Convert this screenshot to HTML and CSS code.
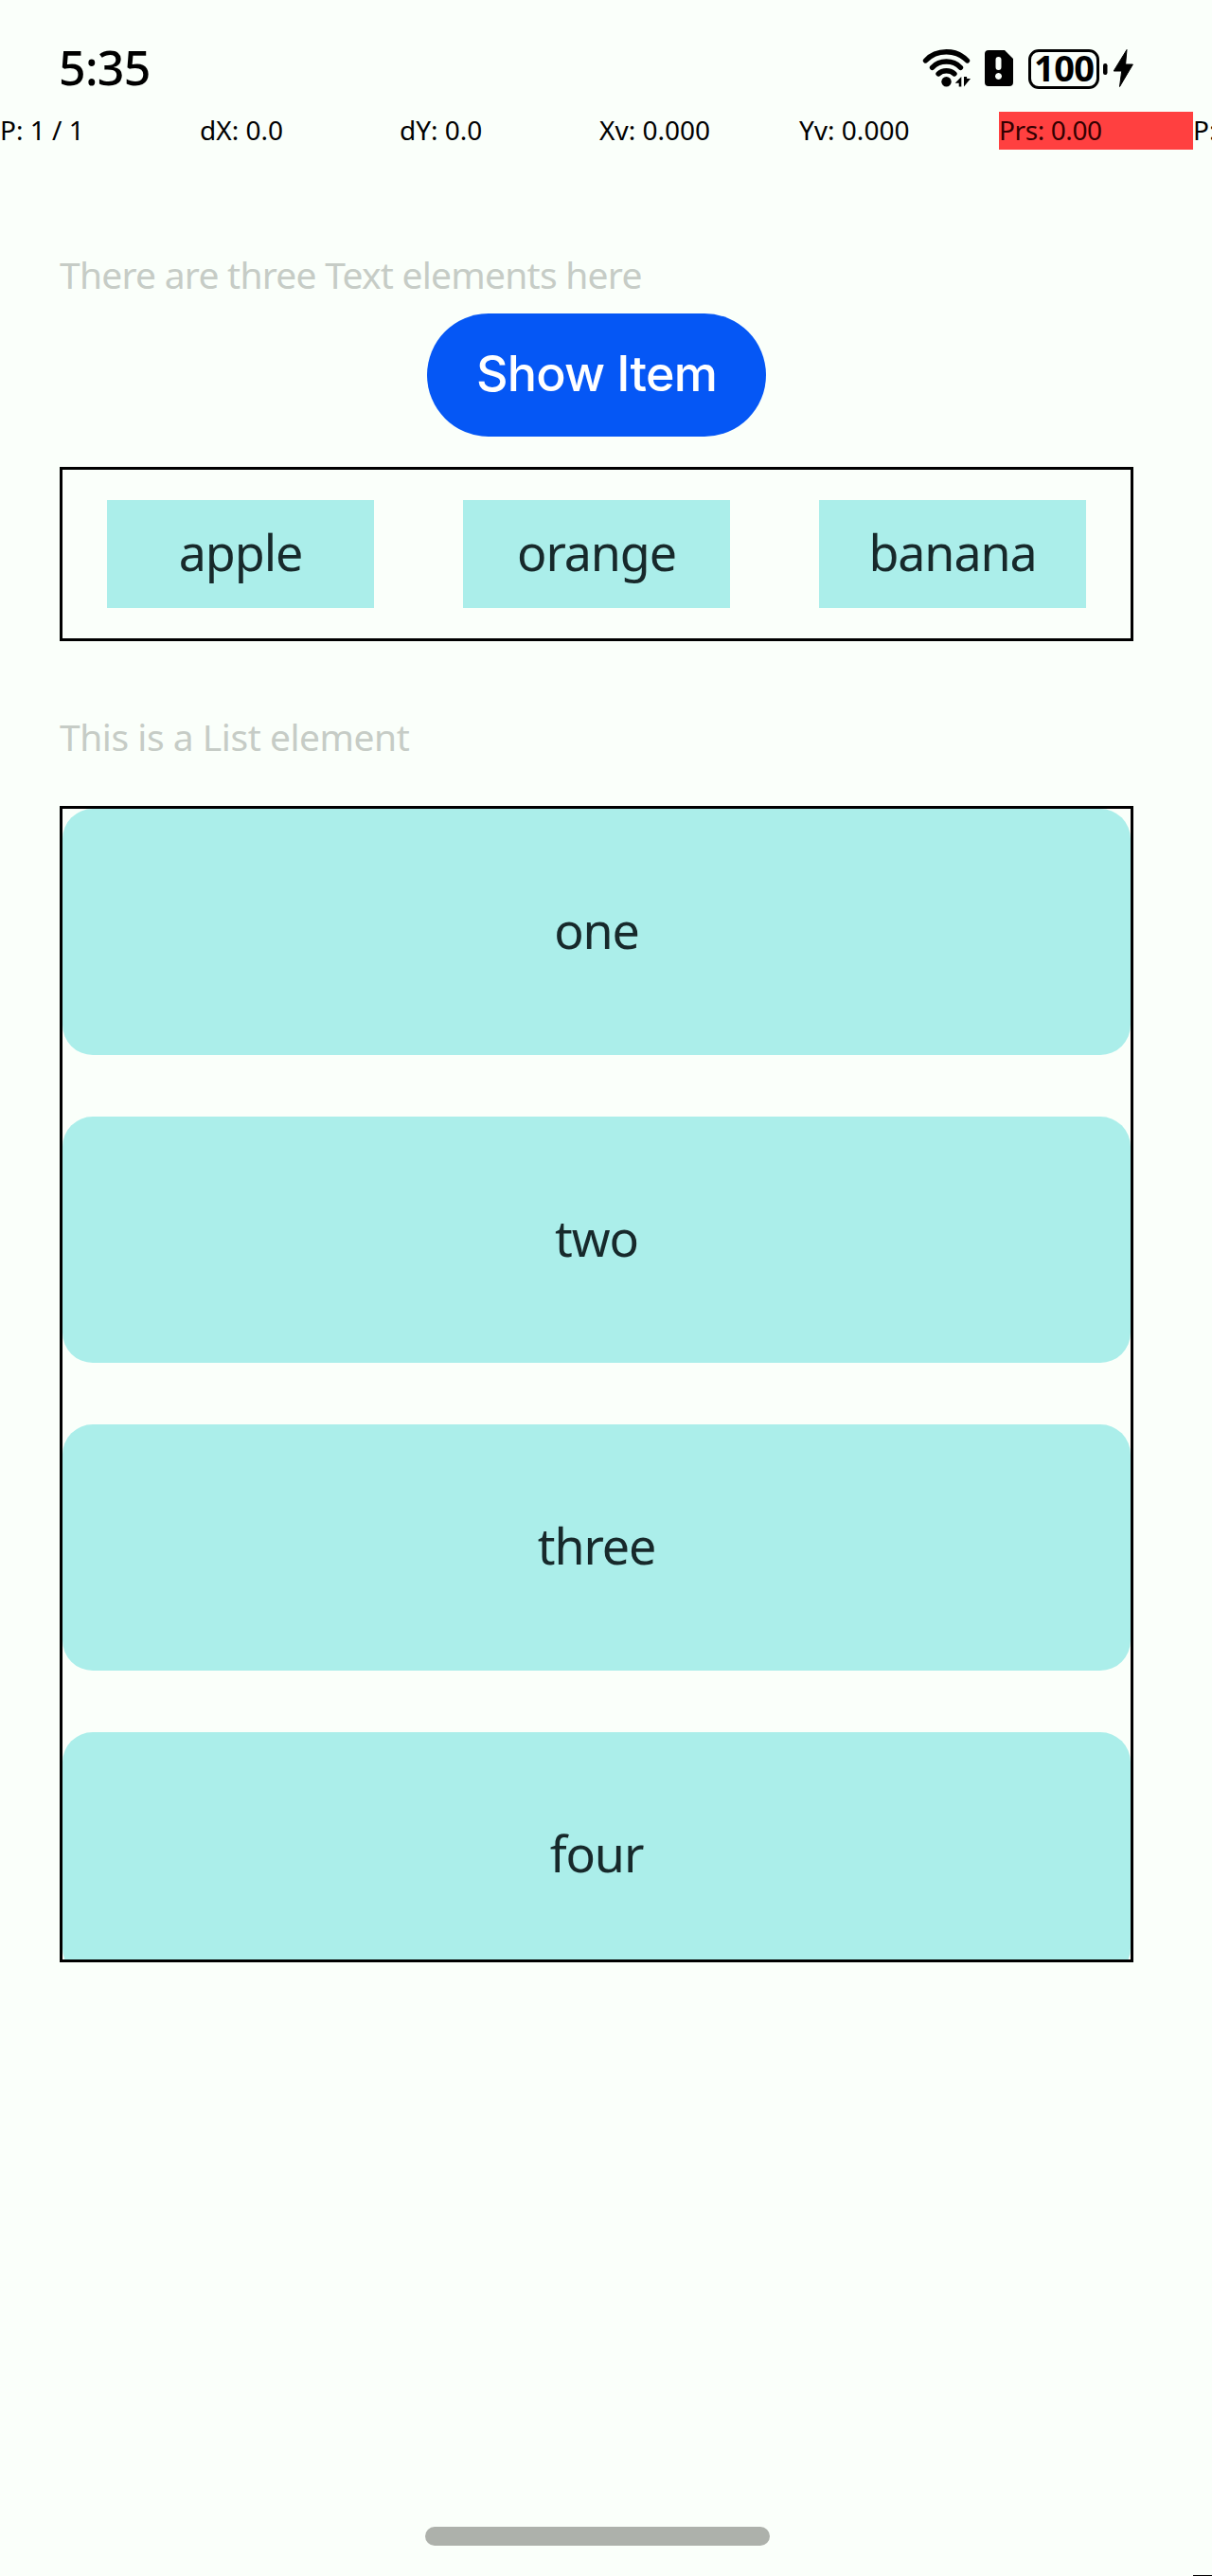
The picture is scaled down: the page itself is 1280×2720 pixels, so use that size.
FILE: index.html
```html
<!DOCTYPE html>
<html lang="en">
<head>
<meta charset="utf-8">
<title>List demo</title>
<link rel="stylesheet" href="styles.css">
</head>
<body>
<div class="screen">
  <header class="status">
    <span class="time">5:35</span>
    <svg class="icons" viewBox="970 45 230 55" width="230" height="55">
      <g fill="none" stroke="#000" stroke-width="5.4" stroke-linecap="round">
        <path d="M977.500 64C989 51.700 1010 51.700 1021.500 64"/>
        <path d="M984.500 71.300C992.500 63 1006.500 63 1014.500 71.300"/>
        <path d="M991 78C995.500 73.700 1003.500 73.700 1008 78"/>
      </g>
      <circle cx="999.500" cy="86.300" r="5.200"/>
      <path d="M1015.300 81v10.500h-2.600v-3.800h-4zM1018 81v10.500l7-8.500h-3.900V81z"/>
      <path fill-rule="evenodd" d="M1044 53h17l9 9v25a4 4 0 0 1-4 4h-22a4 4 0 0 1-4-4v-30a4 4 0 0 1 4-4zM1054.500 60a3 3 0 0 0-3 3v8a3 3 0 0 0 6 0v-8a3 3 0 0 0-3-3zM1054.500 77a3.500 3.500 0 1 0 .01 0z"/>
      <rect x="1087.500" y="53.500" width="72" height="39" rx="9.500" fill="none" stroke="#000" stroke-width="3"/>
      <text class="charge" x="1124" y="86" text-anchor="middle" textLength="64">100</text>
      <rect x="1165" y="67" width="4.500" height="12" rx="2.200"/>
      <path d="M1190 52.500l-13.800 22.500h8.500l-2.200 16.500 13.900-23.500h-7.800z" stroke="#000" stroke-linejoin="round"/>
    </svg>
  </header>
  <div class="pointer">
    <span>P: 1 / 1</span><span>dX: 0.0</span><span>dY: 0.0</span><span>Xv: 0.000</span><span>Yv: 0.000</span><span class="pressure">Prs: 0.00</span><span>P:</span>
  </div>
  <main class="content">
    <p class="label first">There are three Text elements here</p>
    <button class="show">Show Item</button>
    <div class="row">
      <span class="chip">apple</span><span class="chip">orange</span><span class="chip">banana</span>
    </div>
    <p class="label second">This is a List element</p>
    <div class="list">
      <div class="item">one</div>
      <div class="item">two</div>
      <div class="item">three</div>
      <div class="item">four</div>
    </div>
  </main>
  <div class="home"></div>
  <div class="corner"></div>
</div>
</body>
</html>
```
FILE: styles.css
```css
* { box-sizing: border-box; }
body {
  margin: 0;
  background: #fafffa;
  color: #000;
  font-family: "Noto Sans", sans-serif;
}
.screen {
  width: 1280px;
  height: 2720px;
  overflow: hidden;
  display: flex;
  flex-direction: column;
}
.status {
  flex: none;
  height: 118px;
  padding: 45px 80px 0 62px;
  display: flex;
  justify-content: space-between;
  align-items: flex-start;
}
.time {
  font-size: 50px;
  font-weight: 500;
  line-height: 52px;
  letter-spacing: -0.7px;
}
.icons { display: block; }
.charge { font-size: 38px; font-weight: 700; }
.pointer {
  flex: none;
  display: grid;
  grid-template-columns: 211px 211px 211px 211px 211px 205px 20px;
  height: 40px;
  line-height: 39px;
  font-size: 28px;
  white-space: nowrap;
}
.pressure {
  background: #ff4040;
  color: #300;
  letter-spacing: -0.4px;
}
.content {
  flex: none;
  height: 2510px;
  padding: 0 83px 0 63px;
  display: flex;
  flex-direction: column;
}
.label {
  margin: 0;
  font-size: 39px;
  line-height: 52px;
  letter-spacing: -0.75px;
  color: #c6ccc6;
}
.first { margin-top: 106px; }
.show {
  align-self: center;
  width: 358px;
  height: 130px;
  margin: 15px 0 32px;
  padding: 0 0 2px;
  border: 0;
  border-radius: 65px;
  background: #0557f5;
  color: #fff;
  font: 500 52px/128px "Inter", sans-serif;
  letter-spacing: -0.8px;
}
.row {
  height: 184px;
  border: 3px solid #000;
  display: flex;
  justify-content: space-around;
  align-items: center;
}
.chip {
  width: 25%;
  height: 114px;
  line-height: 110px;
  text-align: center;
  font-size: 52px;
  letter-spacing: -1.1px;
  color: #17292b;
  background: #abeeea;
}
.second { margin-top: 75px; letter-spacing: -0.47px; }
.list {
  height: 1221px;
  margin-top: 47px;
  border: 3px solid #000;
  overflow: hidden;
  display: flex;
  flex-direction: column;
  gap: 65px;
}
.item {
  flex: none;
  height: 260px;
  border-radius: 32px;
  line-height: 256px;
  text-align: center;
  font-size: 52px;
  letter-spacing: -1.1px;
  color: #17292b;
  background: #abeeea;
}
.home {
  flex: none;
  width: 364px;
  height: 20px;
  margin-left: 449px;
  border-radius: 10px;
  background: #adb1ab;
}
.corner {
  flex: none;
  width: 20px;
  height: 1px;
  margin: 31px 0 0 auto;
  background: #000;
}
```
